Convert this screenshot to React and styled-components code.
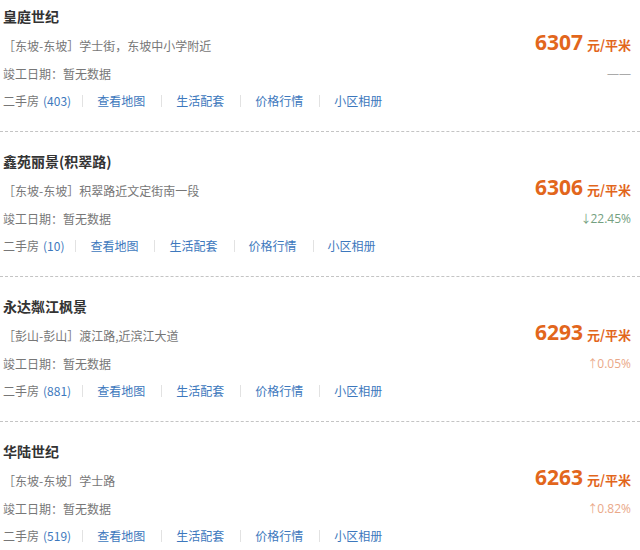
import React from "react";
import styled, { createGlobalStyle } from "styled-components";

const GlobalStyle = createGlobalStyle`
  html, body {
    margin: 0;
    padding: 0;
    background: #ffffff;
  }
  body {
    font-family: "Noto Sans CJK SC", "Noto Sans", sans-serif;
    color: #333;
  }
`;

const List = styled.div`
  width: 640px;
`;

const Item = styled.div`
  display: grid;
  grid-template-columns: 1fr auto;
  grid-auto-rows: auto;
  padding: 16px 9px 17px 3px;
  border-bottom: 1px dashed #c4c4c4;
  &:first-child {
    padding-top: 3px;
  }
`;

const Title = styled.div`
  grid-column: 1 / 3;
  grid-row: 1;
  font-size: 14px;
  font-weight: 700;
  line-height: 26px;
  color: #333;
  margin-bottom: 3px;
`;

const Line = styled.div`
  grid-column: 1;
  font-size: 12px;
  line-height: 28px;
  color: #777;
  white-space: nowrap;
`;

const Address = styled(Line)`
  grid-row: 2;
`;

const Built = styled(Line)`
  grid-row: 3;
`;

const Price = styled.div`
  grid-column: 2;
  grid-row: 2;
  justify-self: end;
  align-self: center;
  margin-top: -6px;
  color: #e2661c;
  font-weight: 700;
  white-space: nowrap;
  font-family: "Open Sans", "Noto Sans CJK SC", sans-serif;
  line-height: 28px;
`;

const Num = styled.span`
  font-size: 21px;
`;

const Unit = styled.span`
  font-size: 13px;
  margin-left: 4px;
  font-family: "Noto Sans CJK SC", sans-serif;
`;

const Change = styled.div`
  grid-column: 2;
  grid-row: 3;
  justify-self: end;
  font-size: 12px;
  line-height: 28px;
  color: ${({ dir }) =>
    dir === "down" ? "#74a080" : dir === "up" ? "#eaa888" : "#aaa"};
  font-family: "Open Sans", "Noto Sans CJK SC", sans-serif;
`;

const Arrow = styled.span`
  font-size: 11px;
  margin-right: -1px;
`;

const Links = styled.div`
  grid-column: 1;
  grid-row: 4;
  display: flex;
  align-items: center;
  font-size: 12px;
  line-height: 26px;
  color: #777;
  white-space: nowrap;
`;

const Count = styled.span`
  color: #3d78bd;
  margin-left: 4px;
  margin-right: 11px;
`;

const Sep = styled.span`
  display: inline-block;
  width: 1px;
  height: 12px;
  background: #e2e2e2;
`;

const Link = styled.a`
  color: #3d78bd;
  text-decoration: none;
  padding: 0 16px 0 14px;
  cursor: pointer;
`;

const data = [
  {
    name: "皇庭世纪",
    area: "［东坡-东坡］",
    addr: "学士街，东坡中小学附近",
    price: "6307",
    change: "——",
    dir: "none",
    count: 403,
  },
  {
    name: "鑫苑丽景(积翠路)",
    area: "［东坡-东坡］",
    addr: "积翠路近文定街南一段",
    price: "6306",
    change: "22.45%",
    dir: "down",
    count: 10,
  },
  {
    name: "永达粼江枫景",
    area: "［彭山-彭山］",
    addr: "渡江路,近滨江大道",
    price: "6293",
    change: "0.05%",
    dir: "up",
    count: 881,
  },
  {
    name: "华陆世纪",
    area: "［东坡-东坡］",
    addr: "学士路",
    price: "6263",
    change: "0.82%",
    dir: "up",
    count: 519,
  },
];

const links = ["查看地图", "生活配套", "价格行情", "小区相册"];

const App = () => {
  return (
    <>
      <GlobalStyle />
      <List>
        {data.map((d) => (
          <Item key={d.name}>
            <Title>{d.name}</Title>
            <Address>
              {d.area}
              {d.addr}
            </Address>
            <Built>竣工日期：暂无数据</Built>
            <Links>
              二手房<Count>({d.count})</Count>
              {links.map((l) => (
                <React.Fragment key={l}>
                  <Sep />
                  <Link>{l}</Link>
                </React.Fragment>
              ))}
            </Links>
            <Price>
              <Num>{d.price}</Num>
              <Unit>元/平米</Unit>
            </Price>
            <Change dir={d.dir}>
              {d.dir === "down" && <Arrow>↓</Arrow>}
              {d.dir === "up" && <Arrow>↑</Arrow>}
              {d.change}
            </Change>
          </Item>
        ))}
      </List>
    </>
  );
};

export default App;
